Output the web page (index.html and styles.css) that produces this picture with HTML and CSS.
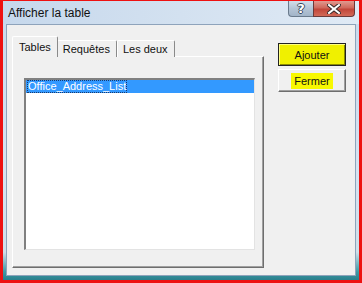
FILE: index.html
```html
<!DOCTYPE html>
<html lang="fr">
<head>
<meta charset="utf-8">
<title>Afficher la table</title>
<link rel="stylesheet" href="styles.css">
</head>
<body>
<div class="window">
  <div class="titlebar">
    <span class="title">Afficher la table</span>
    <div class="caption-buttons">
      <span class="cap-btn help">?</span>
      <span class="cap-btn close">
        <svg width="14" height="10" viewBox="0 0 14 10"><path d="M2 1 L12 9 M12 1 L2 9" stroke="#3a2a2a" stroke-width="4" stroke-linecap="square"/><path d="M2 1 L12 9 M12 1 L2 9" stroke="#fff" stroke-width="2" stroke-linecap="square"/></svg>
      </span>
    </div>
  </div>
  <div class="client">
    <div class="left-col">
      <div class="tabs">
        <span class="tab active">Tables</span>
        <span class="tab">Requêtes</span>
        <span class="tab">Les deux</span>
      </div>
      <div class="panel">
        <div class="listbox">
          <div class="item selected"><span class="focus">Office_Address_List</span></div>
        </div>
      </div>
    </div>
    <div class="right-col">
      <button class="btn default">Ajouter</button>
      <button class="btn"><span class="hl">Fermer</span></button>
    </div>
  </div>
</div>
</body>
</html>
```
FILE: styles.css
```css
html, body {
  margin: 0;
  padding: 0;
}
body {
  background: #ee1111;
  width: 362px;
  height: 283px;
  overflow: hidden;
  font-family: "Liberation Sans", Arial, sans-serif;
}
.window {
  margin: 1px 3px 3px 3px;
  width: 356px;
  height: 279px;
  box-sizing: border-box;
  padding: 0 3px 4px 3px;
  background: linear-gradient(to bottom, #c8d9ec 0%, #d6e3f1 60%, #cfe0ea 90%, #3f9aa5 97%, #2a7f8c 100%);
  display: flex;
  flex-direction: column;
}
.titlebar {
  height: 23px;
  display: flex;
  align-items: flex-start;
  background: linear-gradient(to right, #c6d8ec 0%, #d3e1f0 50%, #e0eaf5 100%);
  margin: 0 -3px;
  padding: 0 4px 0 5px;
}
.title {
  font-size: 12px;
  color: #111;
  align-self: center;
  margin-top: 1px;
}
.caption-buttons {
  margin-left: auto;
  display: flex;
}
.cap-btn {
  height: 16px;
  display: flex;
  align-items: center;
  justify-content: center;
  border: 1px solid #6a7a8c;
  border-top: none;
  box-sizing: border-box;
}
.help {
  width: 25px;
  border-radius: 0 0 0 4px;
  background: linear-gradient(to bottom, #d2dde9 0%, #b4c4d5 50%, #a2b4c8 100%);
  font-family: "DejaVu Sans", sans-serif;
  font-size: 13px;
  font-weight: bold;
  line-height: 15px;
  color: #ffffff;
  text-shadow: 1px 0 0 #3a4a5c, -1px 0 0 #3a4a5c, 0 1px 0 #3a4a5c, 0 -1px 0 #3a4a5c;
  border-right: none;
}
.close {
  width: 42px;
  border-radius: 0 0 4px 0;
  background: linear-gradient(to bottom, #e09a90 0%, #d0685c 45%, #c2463a 55%, #d26a58 100%);
  border-color: #6a3a3a;
}
.client {
  flex: 1;
  background: #f0f0f0;
  border: 1px solid #8ea3bb;
  display: flex;
  padding: 12px 0 0 5px;
}
.left-col {
  width: 252px;
  display: flex;
  flex-direction: column;
}
.tabs {
  display: flex;
  align-items: flex-end;
  height: 20px;
  padding-left: 2px;
  position: relative;
  z-index: 1;
  margin-bottom: -1px;
}
.tab {
  font-size: 11px;
  color: #111;
  height: 17px;
  box-sizing: border-box;
  padding: 2px 6px 0 5px;
  border-top: 1px solid #ffffff;
  border-left: 1px solid #ffffff;
  border-right: 1px solid #8a8a8a;
  border-radius: 2px 2px 0 0;
  background: #f0f0f0;
}
.tab.active {
  height: 21px;
  padding: 4px 6px 0 6px;
  margin-left: -2px;
  margin-right: -1px;
  z-index: 2;
}
.panel {
  width: 252px;
  height: 212px;
  box-sizing: border-box;
  border-top: 1px solid #ffffff;
  border-left: 1px solid #ffffff;
  border-right: 1px solid #6e6e6e;
  border-bottom: 1px solid #6e6e6e;
  box-shadow: inset -1px -1px 0 #a0a0a0;
  padding: 21px 0 0 11px;
}
.listbox {
  width: 231px;
  height: 172px;
  box-sizing: border-box;
  background: #ffffff;
  border-top: 2px solid #808080;
  border-left: 2px solid #808080;
  border-right: 1px solid #e3e3e3;
  border-bottom: 1px solid #e3e3e3;
}
.item {
  height: 13px;
  font-size: 11px;
  line-height: 13px;
  color: #fff;
  background: #3399ff;
  padding-left: 1px;
}
.focus {
  outline: 1px dotted #1a3a6a;
  outline-offset: -1px;
  display: inline-block;
  padding: 0 1px;
}
.right-col {
  display: flex;
  flex-direction: column;
  margin-left: 14px;
  margin-top: 6px;
  gap: 3px;
}
.btn {
  width: 68px;
  height: 23px;
  box-sizing: border-box;
  font-family: "Liberation Sans", Arial, sans-serif;
  font-size: 11px;
  color: #111;
  background: #f0f0f0;
  border-top: 1px solid #ffffff;
  border-left: 1px solid #ffffff;
  border-right: 1px solid #6e6e6e;
  border-bottom: 1px solid #6e6e6e;
  box-shadow: inset -1px -1px 0 #a0a0a0;
  padding: 0;
  margin: 0;
}
.btn.default {
  background: #f0f000;
  border: 1px solid #222222;
  box-shadow: inset 1px 1px 0 #ffff80, inset -1px -1px 0 #8a8a00;
}
.hl {
  background: #f8f800;
  padding: 2px 3px;
}
```
